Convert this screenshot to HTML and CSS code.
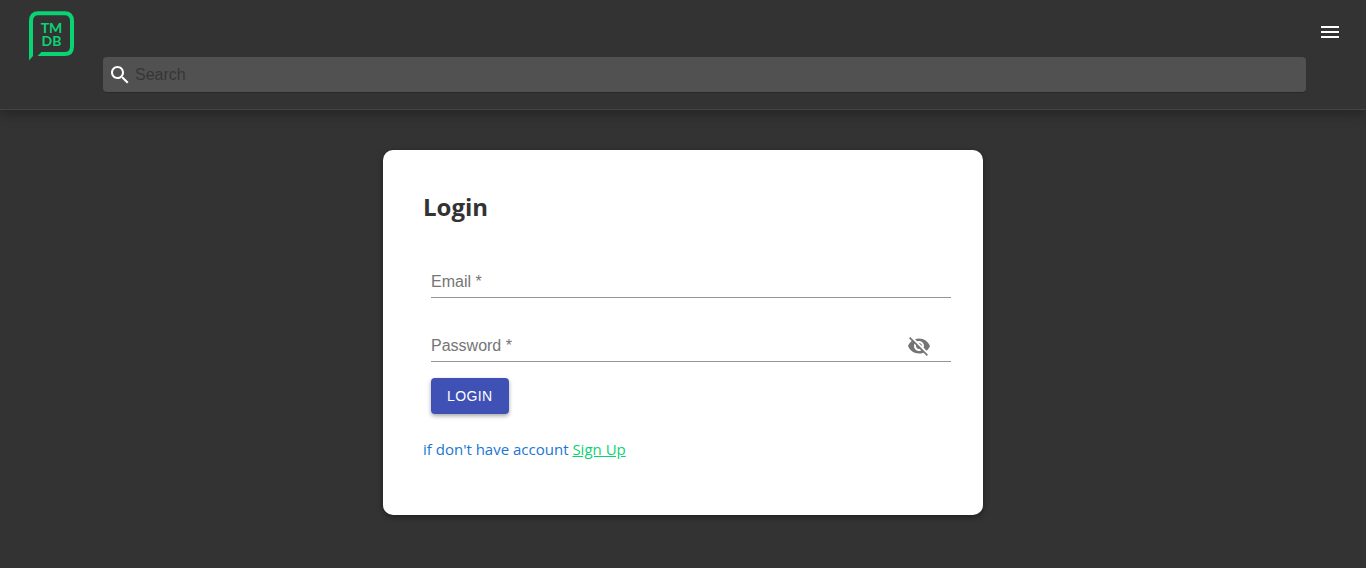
FILE: index.html
```html
<!DOCTYPE html>
<html lang="en">
<head>
<meta charset="utf-8">
<meta name="viewport" content="width=device-width, initial-scale=1">
<title>Login</title>
<link rel="stylesheet" href="styles.css">
</head>
<body>
<header class="header">
  <a class="logo" href="#" aria-label="TMDB home">
    <svg width="46" height="50" viewBox="0 0 46 50">
      <path d="M2 45V10Q2 2.300 9.500 2.300H35.500Q43 2.300 43 10V35.500Q43 43 35.500 43H12" fill="none" stroke="#0ad374" stroke-width="4"/>
      <path d="M0 40H4V45L0 49.500ZM8.500 45L12.500 41V45Z" fill="#0ad374"/>
      <text class="logo-text" text-anchor="middle"><tspan x="22.500" y="22">TM</tspan><tspan x="22.500" y="35">DB</tspan></text>
    </svg>
  </a>
  <button class="menu" type="button" aria-label="Open menu">
    <svg width="24" height="24" viewBox="0 0 24 24" fill="currentColor"><path d="M3 18h18v-2H3v2zm0-5h18v-2H3v2zm0-7v2h18V6H3z"/></svg>
  </button>
  <form class="search" role="search">
    <label class="search-icon" for="search" aria-label="Search">
      <svg width="24" height="24" viewBox="0 0 24 24" fill="currentColor"><path d="M15.500 14h-.79l-.28-.27C15.410 12.590 16 11.110 16 9.500 16 5.910 13.090 3 9.500 3S3 5.910 3 9.500 5.910 16 9.500 16c1.610 0 3.090-.59 4.230-1.570l.27.28v.79l5 4.990L20.490 19l-4.990-5zm-6 0C7.010 14 5 11.990 5 9.500S7.010 5 9.500 5 14 7.010 14 9.500 11.990 14 9.500 14z"/></svg>
    </label>
    <input class="search-input" id="search" type="text" placeholder="Search">
  </form>
</header>
<main class="page">
  <section class="card">
    <h1 class="title">Login</h1>
    <form class="form">
      <div class="field">
        <label class="label" for="email">Email *</label>
        <input class="input" id="email" type="email">
      </div>
      <div class="field">
        <label class="label" for="password">Password *</label>
        <input class="input" id="password" type="password">
        <button class="eye" type="button" aria-label="Show password">
          <svg width="24" height="24" viewBox="0 0 24 24" fill="currentColor"><path d="M12 7c2.760 0 5 2.240 5 5 0 .65-.13 1.260-.36 1.830l2.920 2.920c1.510-1.260 2.700-2.890 3.430-4.750-1.730-4.390-6-7.500-11-7.500-1.400 0-2.740.25-3.980.7l2.160 2.160C10.740 7.130 11.350 7 12 7zM2 4.270l2.280 2.280.46.46C3.080 8.300 1.780 10.020 1 12c1.730 4.390 6 7.500 11 7.500 1.550 0 3.030-.3 4.380-.84l.42.42L19.730 22 21 20.730 3.270 3 2 4.270zM7.530 9.800l1.550 1.550c-.05.21-.08.43-.08.65 0 1.660 1.340 3 3 3 .22 0 .44-.03.65-.08l1.550 1.550c-.67.33-1.410.53-2.200.53-2.760 0-5-2.240-5-5 0-.79.2-1.530.53-2.200zm4.310-.78l3.150 3.150.02-.16c0-1.660-1.340-3-3-3l-.17.01z"/></svg>
        </button>
      </div>
      <button class="submit" type="submit">LOGIN</button>
    </form>
    <p class="signup">if don't have account <a class="signup-link" href="#">Sign Up</a></p>
  </section>
</main>
</body>
</html>
```
FILE: styles.css
```css
* { box-sizing: border-box; }
body {
  margin: 0;
  min-height: 100vh;
  background: #333;
  color: #333;
  font-family: "Segoe UI", "Open Sans", "Noto Sans", sans-serif;
}
button { border: 0; cursor: pointer; }
svg { display: block; }
.header {
  position: relative;
  display: grid;
  grid-template-columns: 74px 1fr 36px;
  grid-template-rows: 49px auto;
  row-gap: 8px;
  padding: 0 24px 16px 29px;
  background: #333;
  border-bottom: 1px solid #444;
  box-shadow: 0 4px 12px rgba(0, 0, 0, 0.3);
}
.logo { grid-row: 1 / 3; padding-top: 11px; }
.logo-text {
  font: 700 14px "Lato", sans-serif;
  fill: #0ad374;
}
.menu {
  grid-column: 3;
  justify-self: end;
  align-self: end;
  margin-bottom: 5px;
  padding: 0;
  background: none;
  color: #fff;
}
.search {
  grid-column: 2;
  grid-row: 2;
  display: flex;
  align-items: center;
  height: 36px;
  padding-left: 5px;
  background: #515151;
  border-radius: 4px;
  border-bottom: 1px solid #292929;
}
.search-icon { color: #fff; }
.search-input {
  flex: 1;
  min-width: 0;
  padding: 0 3px;
  border: 0;
  outline: 0;
  background: none;
  color: #fff;
  font: 16px/20px "Liberation Sans", Arial, sans-serif;
}
.search-input::placeholder { color: #363636; opacity: 1; }
.page { padding: 40px 16px; }
.card {
  max-width: 600px;
  margin: 0 auto;
  padding: 40px 32px 55px 40px;
  background: #fff;
  border-radius: 10px;
  box-shadow: 0 2px 6px rgba(0, 0, 0, 0.4);
}
.title { margin: 0; font-size: 24px; line-height: 34px; font-weight: 700; }
.form { padding: 42px 0 0 8px; }
.field {
  display: flex;
  align-items: center;
  height: 32px;
  margin-bottom: 32px;
  padding-right: 20px;
  border-bottom: 1px solid #949494;
}
.field + .field { margin-bottom: 16px; }
.label,
.input { font: 16px/20px "Liberation Sans", Arial, sans-serif; }
.label { color: #757575; }
.input {
  flex: 1;
  min-width: 0;
  padding: 0 8px;
  border: 0;
  outline: 0;
  background: none;
  color: #333;
}
.eye { padding: 0; background: none; color: #757575; }
.submit {
  display: block;
  padding: 6px 16px;
  border-radius: 4px;
  background: #3f51b5;
  color: #fff;
  font: 500 14px/24px "Liberation Sans", Arial, sans-serif;
  letter-spacing: 0.4px;
  box-shadow: 0 2px 4px rgba(0, 0, 0, 0.35);
}
.signup { margin: 24px 0 0; color: #1976d2; font-size: 15px; line-height: 22px; }
.signup-link { color: #0ad374; }
```
